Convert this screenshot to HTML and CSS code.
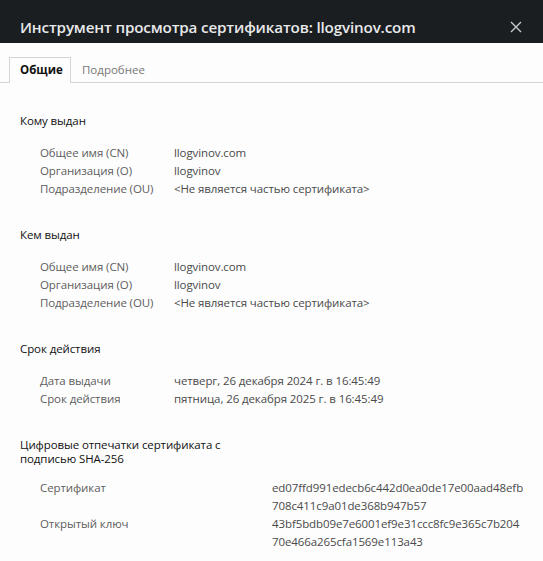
FILE: index.html
```html
<!DOCTYPE html>
<html lang="ru">
<head>
<meta charset="utf-8">
<link rel="stylesheet" href="styles.css">
</head>
<body>
<div class="dialog">
  <header class="titlebar">
    <h1 class="title">Инструмент просмотра сертификатов: llogvinov.com</h1>
    <span class="close">
      <svg width="12" height="12" viewBox="0 0 12 12"><path d="M1 1L11 11M11 1L1 11" stroke="#c8cacc" stroke-width="1.4"/></svg>
    </span>
  </header>
  <nav class="tabs">
    <span class="tab active">Общие</span>
    <span class="tab">Подробнее</span>
  </nav>
  <main class="content">
    <section class="section">
      <h2 class="heading">Кому выдан</h2>
      <div class="rows">
        <span class="label">Общее имя (CN)</span><span class="value">llogvinov.com</span>
        <span class="label">Организация (O)</span><span class="value">llogvinov</span>
        <span class="label">Подразделение (OU)</span><span class="value">&lt;Не является частью сертификата&gt;</span>
      </div>
    </section>
    <section class="section">
      <h2 class="heading">Кем выдан</h2>
      <div class="rows">
        <span class="label">Общее имя (CN)</span><span class="value">llogvinov.com</span>
        <span class="label">Организация (O)</span><span class="value">llogvinov</span>
        <span class="label">Подразделение (OU)</span><span class="value">&lt;Не является частью сертификата&gt;</span>
      </div>
    </section>
    <section class="section">
      <h2 class="heading">Срок действия</h2>
      <div class="rows">
        <span class="label">Дата выдачи</span><span class="value">четверг, 26 декабря 2024 г. в 16:45:49</span>
        <span class="label">Срок действия</span><span class="value">пятница, 26 декабря 2025 г. в 16:45:49</span>
      </div>
    </section>
    <section class="section">
      <h2 class="heading narrow">Цифровые отпечатки сертификата с подписью SHA-256</h2>
      <div class="rows wide">
        <span class="label">Сертификат</span><span class="value">ed07ffd991edecb6c442d0ea0de17e00aad48efb<br>708c411c9a01de368b947b57</span>
        <span class="label">Открытый ключ</span><span class="value">43bf5bdb09e7e6001ef9e31ccc8fc9e365c7b204<br>70e466a265cfa1569e113a43</span>
      </div>
    </section>
  </main>
</div>
</body>
</html>
```

FILE: styles.css
```css
* { box-sizing: border-box; margin: 0; padding: 0; }
html, body { background: #fdfdfd; }
body {
  font-family: "Open Sans", "Noto Sans", sans-serif;
  font-size: 11.5px;
  color: #555;
  width: 543px;
  height: 561px;
  overflow: hidden;
}
.titlebar {
  background: #1b1e21;
  height: 43px;
  display: flex;
  align-items: flex-end;
  justify-content: space-between;
  padding: 0 21px 5px 20px;
}
.title {
  color: #e8e9ea;
  font-size: 15.2px;
  font-weight: 600;
  line-height: 22px;
  letter-spacing: -0.15px;
}
.close { display: flex; padding-bottom: 5px; }
.tabs {
  display: flex;
  padding: 14px 0 0 9px;
  border-bottom: 1px solid #d4d4d4;
  height: 40px;
}
.tab {
  padding: 5px 11px 0 11px;
  color: #777;
  line-height: 16px;
}
.tab.active {
  color: #111;
  font-weight: 700;
  background: #fdfdfd;
  border: 1px solid #d4d4d4;
  border-bottom: none;
  padding: 4px 10px 0 10px;
  margin-bottom: -1px;
  width: 62px;
}
.content { padding: 31px 20px 0 20px; letter-spacing: -0.1px; }
.section { margin-bottom: 30px; }
.heading {
  font-size: 11.5px;
  font-weight: 400;
  color: #111;
  line-height: 14px;
  margin-bottom: 16px;
}
.heading.narrow { width: 240px; margin-bottom: 13px; }
.rows {
  display: grid;
  grid-template-columns: 134px 1fr;
  padding-left: 20px;
  line-height: 18px;
}
.rows.wide { grid-template-columns: 232px 1fr; }
.label { color: #5e5e5e; }
.value { color: #4a4a4a; }
```
